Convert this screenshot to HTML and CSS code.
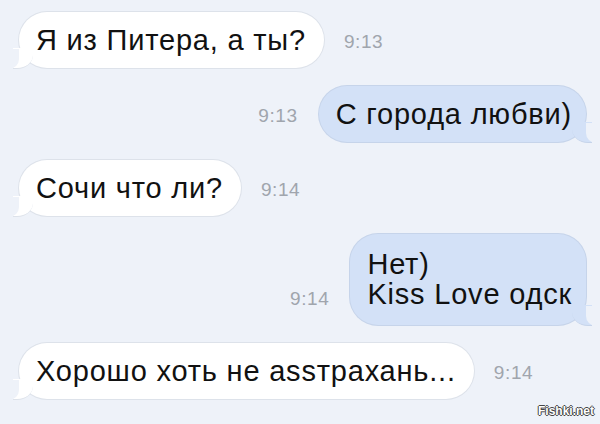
FILE: index.html
```html
<!DOCTYPE html>
<html>
<head>
    <meta charset="utf-8">
    <link rel="stylesheet" href="styles.css">
</head>
<body>
    <div class="chat">
        <div class="row in">
            <div class="bubble">Я из Питера, а ты?</div>
            <span class="time">9:13</span>
        </div>
        <div class="row out">
            <span class="time">9:13</span>
            <div class="bubble">С города любви)</div>
        </div>
        <div class="row in">
            <div class="bubble">Сочи что ли?</div>
            <span class="time">9:14</span>
        </div>
        <div class="row out multi">
            <span class="time">9:14</span>
            <div class="bubble">Нет)<br>Kiss Love одск</div>
        </div>
        <div class="row in">
            <div class="bubble">Хорошо хоть не assтрахань...</div>
            <span class="time">9:14</span>
        </div>
    </div>
    <div class="watermark">Fishki.net</div>
</body>
</html>
```

FILE: styles.css
```css
html, body {
    margin: 0;
    height: 100%;
}

body {
    width: 600px;
    height: 424px;
    overflow: hidden;
    position: relative;
    background-color: #eef2f9;
    font-family: "Liberation Sans", Arial, sans-serif;
}

.chat {
    display: flex;
    flex-direction: column;
    gap: 18px;
    padding: 12px 14px 0 19px;
}

.row {
    display: flex;
    align-items: center;
    gap: 20px;
}

.row.out {
    justify-content: flex-end;
    gap: 21px;
}

.bubble {
    position: relative;
    padding: 13px 18px 13px 17px;
    font-size: 29px;
    line-height: 30px;
    letter-spacing: 0.8px;
    color: #111;
    border-radius: 28px;
}

.row.out .bubble {
    padding: 13px 14px 13px 17px;
}

.row.multi .bubble {
    padding: 15px 14px 16px 17px;
}

.row.in .bubble {
    background-color: #fff;
    box-shadow: 0 0 0 1px #dde2ea;
}

.row.out .bubble {
    background-color: #d3e1f7;
    box-shadow: 0 0 0 1px #c6d4ea;
}

/* tails */
.bubble::before,
.bubble::after {
    content: "";
    position: absolute;
    bottom: -1px;
    height: 20px;
}

.row.in .bubble::before {
    left: -6px;
    width: 20px;
    background-color: #fff;
    border-bottom-right-radius: 16px 14px;
    border-bottom: 1px solid #dde2ea;
}

.row.in .bubble::after {
    left: -10px;
    width: 10px;
    background-color: #eef2f9;
    border-bottom-right-radius: 10px;
}

.row.out .bubble::before {
    right: -6px;
    width: 20px;
    background-color: #d3e1f7;
    border-bottom-left-radius: 16px 14px;
    border-bottom: 1px solid #c6d4ea;
}

.row.out .bubble::after {
    right: -10px;
    width: 10px;
    background-color: #eef2f9;
    border-bottom-left-radius: 10px;
}

.time {
    font-size: 19px;
    letter-spacing: 0.6px;
    color: #a0a5ad;
    padding-top: 4px;
}

.row.multi .time {
    align-self: flex-end;
    padding-bottom: 15px;
}

.watermark {
    position: absolute;
    right: 6px;
    bottom: 6px;
    font-size: 12px;
    font-weight: bold;
    color: #fff;
    text-shadow: -1px 0 #444, 1px 0 #444, 0 -1px #444, 0 1px #444;
}
```
